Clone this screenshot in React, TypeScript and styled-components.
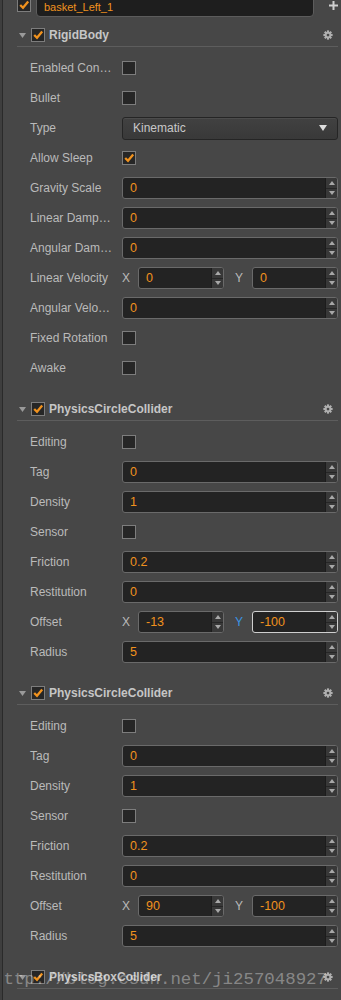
import React from "react";
import styled, { createGlobalStyle } from "styled-components";

// Style
const GlobalStyle = createGlobalStyle`
  html, body {
    margin: 0;
    padding: 0;
    background: #3e3e3e;
  }
  body {
    font-family: "Liberation Sans", Arial, sans-serif;
    overflow: hidden;
  }
`;

const ORANGE = "#f0921e";
const LABEL = "#bababa";
const PANEL_BG = "#474747";

// Type
type Field =
  | { label: string; kind: "check"; checked?: boolean }
  | { label: string; kind: "select"; value: string }
  | { label: string; kind: "number"; value: string }
  | { label: string; kind: "vec"; x: string; y: string; focusY?: boolean };

interface SectionData {
  title: string;
  fields: Field[];
}

const circleFields = (x: string, focusY: boolean): Field[] => [
  { label: "Editing", kind: "check" },
  { label: "Tag", kind: "number", value: "0" },
  { label: "Density", kind: "number", value: "1" },
  { label: "Sensor", kind: "check" },
  { label: "Friction", kind: "number", value: "0.2" },
  { label: "Restitution", kind: "number", value: "0" },
  { label: "Offset", kind: "vec", x, y: "-100", focusY },
  { label: "Radius", kind: "number", value: "5" },
];

const sections: SectionData[] = [
  {
    title: "RigidBody",
    fields: [
      { label: "Enabled Con…", kind: "check" },
      { label: "Bullet", kind: "check" },
      { label: "Type", kind: "select", value: "Kinematic" },
      { label: "Allow Sleep", kind: "check", checked: true },
      { label: "Gravity Scale", kind: "number", value: "0" },
      { label: "Linear Damp…", kind: "number", value: "0" },
      { label: "Angular Dam…", kind: "number", value: "0" },
      { label: "Linear Velocity", kind: "vec", x: "0", y: "0" },
      { label: "Angular Velo…", kind: "number", value: "0" },
      { label: "Fixed Rotation", kind: "check" },
      { label: "Awake", kind: "check" },
    ],
  },
  { title: "PhysicsCircleCollider", fields: circleFields("-13", true) },
  { title: "PhysicsCircleCollider", fields: circleFields("90", false) },
  { title: "PhysicsBoxCollider", fields: [] },
];

function Check({ checked }: { checked?: boolean }) {
  return (
    <CheckBox>
      {checked && (
        <svg width="12" height="12" viewBox="0 0 12 12">
          <polyline
            points="2.2,6 5,8.8 10.2,2.6"
            fill="none"
            stroke={ORANGE}
            strokeWidth="2.3"
          />
        </svg>
      )}
    </CheckBox>
  );
}

function Gear() {
  return (
    <svg width="10" height="10" viewBox="0 0 16 16">
      {[0, 45, 90, 135, 180, 225, 270, 315].map((a) => (
        <rect key={a} x="6.3" y="0.6" width="3.4" height="3.6" fill="#b0b0b0" transform={`rotate(${a} 8 8)`} />
      ))}
      <circle cx="8" cy="8" r="5.2" fill="#b0b0b0" />
      <circle cx="8" cy="8" r="2.2" fill={PANEL_BG} />
    </svg>
  );
}

function NumberField({ value, focus }: { value: string; focus?: boolean }) {
  return (
    <NumberBox $focus={focus}>
      <Value>{value}</Value>
      <Spinner>
        <SpinHalf>
          <svg width="6" height="4" viewBox="0 0 6 4">
            <polygon points="0,4 6,4 3,0" fill="#a8a8a8" />
          </svg>
        </SpinHalf>
        <SpinHalf $bottom>
          <svg width="6" height="4" viewBox="0 0 6 4">
            <polygon points="0,0 6,0 3,4" fill="#a8a8a8" />
          </svg>
        </SpinHalf>
      </Spinner>
    </NumberBox>
  );
}

function FieldControl({ field }: { field: Field }) {
  switch (field.kind) {
    case "check":
      return <Check checked={field.checked} />;
    case "select":
      return (
        <Select>
          <span>{field.value}</span>
          <svg width="8" height="6" viewBox="0 0 8 6">
            <polygon points="0,0 8,0 4,6" fill="#dcdcdc" />
          </svg>
        </Select>
      );
    case "number":
      return <NumberField value={field.value} />;
    case "vec":
      return (
        <VecWrap>
          <AxisLabel>X</AxisLabel>
          <NumberField value={field.x} />
          <AxisLabel $active={field.focusY} $wide>
            Y
          </AxisLabel>
          <NumberField value={field.y} focus={field.focusY} />
        </VecWrap>
      );
  }
}

export default function App() {
  return (
    <Frame>
      <GlobalStyle />
      <Panel>
        <TopRow>
          <Check checked />
          <NameInput>basket_Left_1</NameInput>
          <svg width="9" height="9" viewBox="0 0 9 9">
            <rect x="3.5" y="0" width="2" height="9" fill="#cfcfcf" />
            <rect x="0" y="3.5" width="9" height="2" fill="#cfcfcf" />
          </svg>
        </TopRow>

        {sections.map((s, i) => (
          <Section key={i}>
            <Header>
              <svg width="7" height="5" viewBox="0 0 7 5">
                <polygon points="0,0 7,0 3.5,5" fill="#9a9a9a" />
              </svg>
              <Check checked />
              <Title>{s.title}</Title>
              <GearSlot>
                <Gear />
              </GearSlot>
            </Header>
            {s.fields.length > 0 && (
              <Rows>
                {s.fields.map((f, j) => (
                  <Row key={j}>
                    <Label>{f.label}</Label>
                    <Control>
                      <FieldControl field={f} />
                    </Control>
                  </Row>
                ))}
              </Rows>
            )}
          </Section>
        ))}

        <Watermark>http://blog.csdn.net/ji257048927</Watermark>
      </Panel>
    </Frame>
  );
}

const Frame = styled.div`
  min-height: 100vh;
  padding-left: 2px;
  background: #3e3e3e;
`;

const Panel = styled.div`
  position: relative;
  display: flex;
  flex-direction: column;
  min-height: 100vh;
  padding-right: 3px;
  border-left: 1px solid #2a2a2a;
  background: ${PANEL_BG};
  overflow: hidden;
`;

const TopRow = styled.div`
  display: flex;
  align-items: center;
  height: 24px;
  margin-top: -8px;
  padding-left: 14px;
  padding-top: 2px;
  box-sizing: border-box;

  & > svg {
    margin-left: 15px;
    margin-right: 0;
  }
`;

const NameInput = styled.div`
  flex: 1;
  height: 24px;
  margin-left: 5px;
  padding: 6px 0 0 7px;
  box-sizing: border-box;
  border: 1px solid #5c5c5c;
  border-radius: 4px;
  background: #1e1e1e;
  color: ${ORANGE};
  font-size: 11px;
  line-height: 14px;
`;

const Section = styled.div`
  margin-top: 8px;

  & + & {
    margin-top: 15px;
  }
`;

const Header = styled.div`
  display: flex;
  align-items: center;
  height: 22px;
  margin-left: 14px;
  padding-left: 2px;
  padding-right: 5px;
  border-bottom: 1px solid #5d5d5d;

  & > svg {
    margin-right: 5px;
  }
`;

const Title = styled.div`
  margin-left: 4px;
  color: #c6c6c6;
  font-size: 12px;
  font-weight: bold;
`;

const GearSlot = styled.div`
  display: flex;
  margin-left: auto;
`;

const Rows = styled.div`
  display: flex;
  flex-direction: column;
  padding-top: 6px;
  padding-left: 27px;
`;

const Row = styled.div`
  display: flex;
  align-items: center;
  height: 30px;
`;

const Label = styled.div`
  width: 92px;
  flex-shrink: 0;
  color: ${LABEL};
  font-size: 12px;
  white-space: nowrap;
`;

const Control = styled.div`
  flex: 1;
  display: flex;
  align-items: center;
`;

const CheckBox = styled.div`
  display: flex;
  align-items: center;
  justify-content: center;
  width: 14px;
  height: 14px;
  box-sizing: border-box;
  border: 1px solid #7d7d7d;
  background: #262626;
  flex-shrink: 0;
`;

const Select = styled.div`
  flex: 1;
  display: flex;
  align-items: center;
  justify-content: space-between;
  height: 23px;
  padding: 0 10px 0 10px;
  box-sizing: border-box;
  border: 1px solid #252525;
  border-radius: 3px;
  background: linear-gradient(#414141, #393939);
  box-shadow: inset 0 1px 0 #4c4c4c;
  color: #c8c8c8;
  font-size: 12px;
`;

const NumberBox = styled.div<{ $focus?: boolean }>`
  flex: 1;
  display: flex;
  height: 22px;
  box-sizing: border-box;
  border: 1px solid ${(p) => (p.$focus ? "#cfcfcf" : "#6a6a6a")};
  border-radius: 3px;
  background: #232323;
  overflow: hidden;
`;

const Value = styled.div`
  flex: 1;
  display: flex;
  align-items: center;
  padding-left: 7px;
  color: ${ORANGE};
  font-size: 12.5px;
`;

const Spinner = styled.div`
  display: flex;
  flex-direction: column;
  width: 11px;
  border-left: 1px solid #1c1c1c;
  background: #383838;
`;

const SpinHalf = styled.div<{ $bottom?: boolean }>`
  flex: 1;
  display: flex;
  align-items: center;
  justify-content: center;
  border-top: ${(p) => (p.$bottom ? "1px solid #262626" : "none")};
`;

const VecWrap = styled.div`
  flex: 1;
  display: flex;
  align-items: center;
`;

const AxisLabel = styled.div<{ $active?: boolean; $wide?: boolean }>`
  width: ${(p) => (p.$wide ? "17px" : "16px")};
  margin-left: ${(p) => (p.$wide ? "11px" : "0")};
  flex-shrink: 0;
  color: ${(p) => (p.$active ? "#3a95e4" : LABEL)};
  font-size: 12px;
`;

const Watermark = styled.div`
  position: absolute;
  left: -10px;
  top: 971px;
  color: rgba(255, 255, 255, 0.36);
  font-family: "Liberation Mono", "Courier New", monospace;
  font-size: 17.4px;
  line-height: 1;
  white-space: nowrap;
  pointer-events: none;
`;
